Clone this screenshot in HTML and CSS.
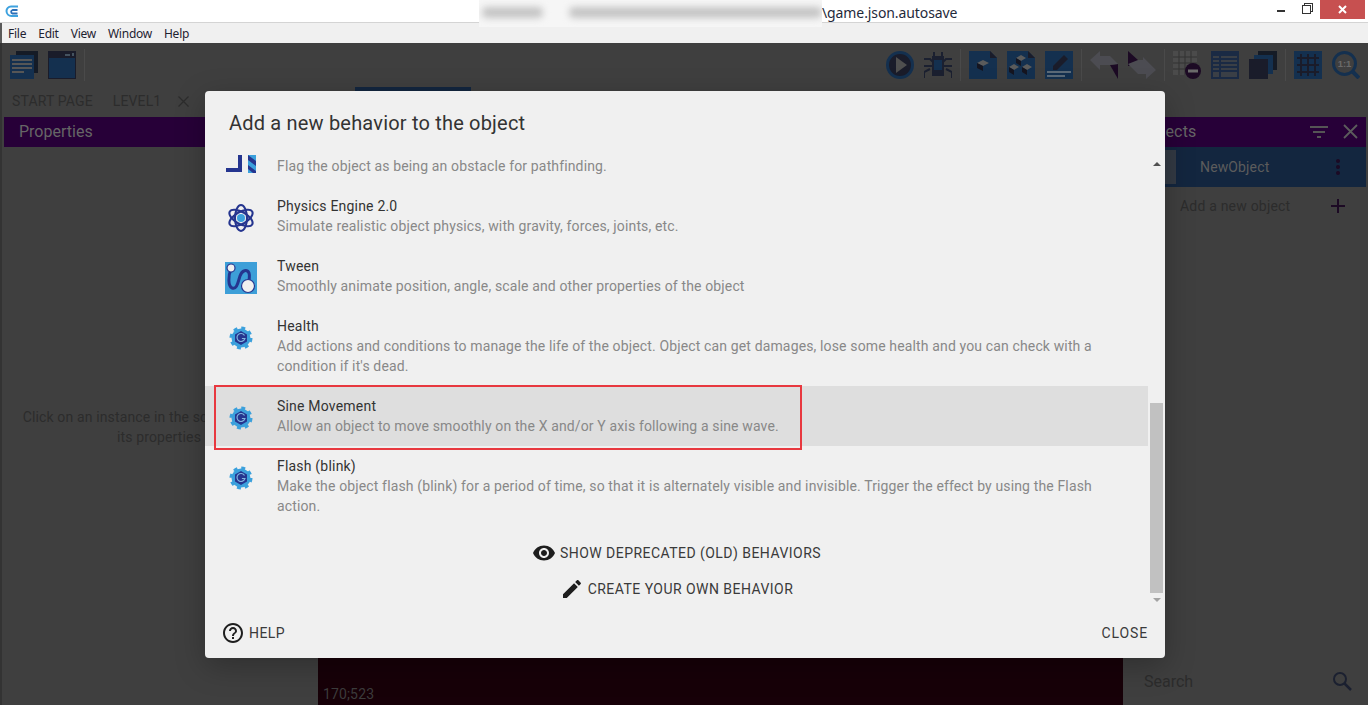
FILE: index.html
```html
<!DOCTYPE html>
<html lang="en">
<head>
    <meta charset="UTF-8">
    <meta name="viewport" content="width=device-width, initial-scale=1.0">
    <title>Add a new behavior</title>
    <link rel="stylesheet" href="styles.css">
</head>
<body>
    <!-- Shared icons -->
    <svg class="icon-defs" width="0" height="0">
        <symbol id="gear" viewBox="0 0 32 32">
            <circle cx="16" cy="16" r="9.5" fill="#3ba0dc"/>
            <circle cx="16" cy="16" r="10" fill="none" stroke="#3ba0dc" stroke-width="3" stroke-dasharray="3.9 3.95"/>
            <path d="M16 9l6 3.500v7L16 23l-6-3.500v-7z" fill="#25358f"/>
            <path d="M19.500 13.500a4 4 0 1 0 .4 3h-3" fill="none" stroke="#7fb4e0" stroke-width="1.200"/>
        </symbol>
    </svg>

    <!-- Window chrome -->
    <div class="titlebar">
        <svg class="app-logo" width="14" height="14" viewBox="0 0 14 14">
            <path d="M13 2.500H6a4.500 4.500 0 0 0-4.500 4.600A5 5 0 0 0 6.500 12H13" fill="none" stroke="#3ea2df" stroke-width="2"/>
            <path d="M12.500 6H7.500a1.800 1.800 0 0 0 0 3.500h5" fill="none" stroke="#2b6fb8" stroke-width="1.800"/>
        </svg>
        <div class="blurred-path">
            <span class="blob blob-short"></span>
            <span class="blob blob-long"></span>
        </div>
        <span class="title-text">\game.json.autosave</span>
        <div class="window-btns">
            <span class="win-min"></span>
            <span class="win-restore"></span>
            <span class="win-close">
                <svg width="11" height="11" viewBox="0 0 11 11"><path d="M2 2l7 7M9 2l-7 7" stroke="#fff" stroke-width="2"/></svg>
            </span>
        </div>
    </div>
    <div class="menubar">
        <span>File</span>
        <span>Edit</span>
        <span>View</span>
        <span>Window</span>
        <span>Help</span>
    </div>

    <!-- Editor, dimmed behind the dialog -->
    <div class="app">
        <div class="toolbar">
            <svg class="tool" viewBox="0 0 28 28"><path d="M6 0h22v22H6z" fill="#151b26"/><path d="M0 4h24v24H0z" fill="#14304f"/><path d="M2 8h20v2H2zM2 12h20v2H2zM2 16h20v2H2zM2 20h12v2H2z" fill="#565656"/></svg>
            <svg class="tool" viewBox="0 0 28 28"><path d="M0 0h28v28H0z" fill="#1a1c2a"/><path d="M1 7h26v20H1z" fill="#14304f"/><path d="M17 3h5v2h-5zM24 2h2v3h-2z" fill="#44525f"/></svg>
            <span class="tool-sep"></span>

            <span class="tool-spacer"></span>

            <svg class="tool" viewBox="0 0 28 28"><circle cx="14" cy="14" r="12.500" fill="#1a1c2a" stroke="#14304f" stroke-width="3"/><path d="M10 6l11 8-11 8z" fill="#4f4f4f"/></svg>
            <svg class="tool" viewBox="0 0 28 28"><path d="M0 8h6l3 3h10l3-3h6M0 15h28M0 27v-6l6-3M28 27v-6l-6-3M10 1v5M18 1v5" fill="none" stroke="#1b2030" stroke-width="2"/><path d="M8 5h12v20H8z" fill="#1b2030"/><path d="M10 9h8v10h-8z" fill="#14304f"/></svg>
            <span class="tool-sep"></span>
            <svg class="tool" viewBox="0 0 28 28"><path d="M0 0h21l7 7v21H0z" fill="#14304f"/><path d="M21 0l7 7h-7z" fill="#1a1c2a"/><path d="M14 9l6 3-6 3-6-3z" fill="#5b5b5b"/><path d="M8 12l6 3v5l-6-3z" fill="#151520"/></svg>
            <svg class="tool" viewBox="0 0 28 28"><path d="M0 0h21l7 7v21H0z" fill="#14304f"/><path d="M21 0l7 7h-7z" fill="#1a1c2a"/><path d="M14 4l5 3-5 3-5-3zM7 13l5 3-5 3-5-3zM20 13l5 3-5 3-5-3z" fill="#5b5b5b"/><path d="M9 7l5 3v5l-5-3zM2 16l5 3v5l-5-3zM15 16l5 3v5l-5-3z" fill="#151520"/></svg>
            <svg class="tool" viewBox="0 0 28 28"><path d="M0 0h28v28H0z" fill="#14304f"/><path d="M8 15L19 4l4 4-11 11H8z" fill="#1a1c2a"/><path d="M2 20h24v2H2zM2 24h18v2H2z" fill="#5b6a78"/></svg>
            <span class="tool-sep"></span>
            <svg class="tool" viewBox="0 0 28 28"><path d="M20 14l8-1v15z" fill="#1c0a24"/><path d="M0 9L10 0v5h10l8 8-8 1H10v5z" fill="#4c4c52"/></svg>
            <svg class="tool" viewBox="0 0 28 28"><path d="M0 0l10 9v5l-10 1z" fill="#1c0a24"/><path d="M0 13l10-4h5V6l13 13-10 9v-5h-8z" fill="#4c4c52"/></svg>
            <span class="tool-sep"></span>
            <svg class="tool" viewBox="0 0 28 28"><path d="M0 0h24v24H0z" fill="#4b4b4b"/><path d="M6 0v24M12 0v24M18 0v24M0 6h24M0 12h24M0 18h24" stroke="#333" stroke-width="1"/><circle cx="20" cy="20" r="8" fill="#1c0a24"/><path d="M15 18.500h10v3H15z" fill="#6a6a6a"/></svg>
            <svg class="tool" viewBox="0 0 28 28"><path d="M0 0h28v28H0z" fill="#1a2a44"/><path d="M2 5h24v21H2z" fill="#3a3f46"/><path d="M2 8h24M2 12h24M2 16h24M2 20h24M9 5v21" stroke="#1a2a44" stroke-width="2"/></svg>
            <svg class="tool" viewBox="0 0 28 28"><path d="M9 0h19v19H9z" fill="#151b26"/><path d="M5 4h19v19H5z" fill="#14304f"/><path d="M0 8h19v20H0z" fill="#1a1c2a"/></svg>
            <span class="tool-sep"></span>
            <svg class="tool" viewBox="0 0 28 28"><path d="M0 0h28v28H0z" fill="#14304f"/><path d="M7 3v22M14 3v22M21 3v22M3 7h22M3 14h22M3 21h22" stroke="#1a1c2a" stroke-width="2"/></svg>
            <svg class="tool" viewBox="0 0 28 28"><circle cx="12.500" cy="12.500" r="11" fill="none" stroke="#14304f" stroke-width="3"/><path d="M20 20l7 7" stroke="#14304f" stroke-width="4"/><text x="12.500" y="16" class="tool-text">1:1</text></svg>
        </div>

        <div class="tabs">
            <span class="tab">START PAGE</span>
            <span class="tab">LEVEL1</span>
            <svg class="tab-close" width="11" height="11" viewBox="0 0 11 11"><path d="M0.500 0.500l10 10M10.500 0.500l-10 10" stroke="#2c2c2c" stroke-width="1.200"/></svg>
            <span class="tab-active"></span>
        </div>

        <div class="panels">
            <div class="panel-left">
                <div class="panel-title">Properties</div>
                <div class="panel-hint">Click on an instance in the scene to display<br>its properties</div>
            </div>
            <div class="scene">
                <span class="coords">170;523</span>
            </div>
            <div class="panel-right">
                <div class="panel-title objects-title">
                    <span class="objects-name">Objects</span>
                    <svg width="20" height="14" viewBox="0 0 20 14"><path d="M1 2h18v2H1zM4 7h12v2H4zM8 12h4v2H8z" fill="#555"/></svg>
                    <svg class="objects-close" width="15" height="15" viewBox="0 0 15 15"><path d="M1 1l13 13M14 1L1 14" stroke="#5c5c5c" stroke-width="1.800"/></svg>
                </div>
                <div class="object-row">
                    <span class="object-thumb"></span>
                    <span class="object-name">NewObject</span>
                    <svg width="4" height="16" viewBox="0 0 4 16"><circle cx="2" cy="2" r="2" fill="#1c0a24"/><circle cx="2" cy="8" r="2" fill="#1c0a24"/><circle cx="2" cy="14" r="2" fill="#1c0a24"/></svg>
                </div>
                <div class="add-object">
                    <span>Add a new object</span>
                    <svg width="14" height="14" viewBox="0 0 14 14"><path d="M7 0v14M0 7h14" stroke="#1c0a24" stroke-width="2"/></svg>
                </div>
                <div class="object-search">
                    <span>Search</span>
                    <svg width="20" height="20" viewBox="0 0 20 20"><circle cx="8" cy="8" r="6" fill="none" stroke="#1b2030" stroke-width="2"/><path d="M12.500 12.500L19 19" stroke="#1b2030" stroke-width="2.500"/></svg>
                </div>
            </div>
        </div>
    </div>

    <!-- Add behavior dialog -->
    <div class="dialog">
        <h2>Add a new behavior to the object</h2>
        <div class="dialog-body">
            <div class="behavior-list">
                <div class="rows">
                    <div class="row row-clipped">
                        <svg class="row-icon" viewBox="0 0 32 32">
                            <path d="M1 26h12V13h4v17H1z" fill="#25358f"/>
                            <path d="M23 13h8v18h-8z" fill="#3ba0dc"/>
                            <path d="M23 13l8 6v5l-8-6zM23 23l8 6v2h-3l-5-4z" fill="#25358f"/>
                        </svg>
                        <div class="row-text">
                            <div class="row-name">&nbsp;</div>
                            <div class="row-desc">Flag the object as being an obstacle for pathfinding.</div>
                        </div>
                    </div>
                    <div class="row">
                        <svg class="row-icon" viewBox="0 0 32 32">
                            <g fill="none" stroke="#25358f" stroke-width="2">
                                <ellipse cx="16" cy="16" rx="13" ry="6" transform="rotate(30 16 16)"/>
                                <ellipse cx="16" cy="16" rx="13" ry="6" transform="rotate(90 16 16)"/>
                                <ellipse cx="16" cy="16" rx="13" ry="6" transform="rotate(150 16 16)"/>
                                <circle cx="16" cy="16" r="7" stroke-width="1"/>
                            </g>
                            <circle cx="16" cy="16" r="4" fill="#3ba0dc"/>
                        </svg>
                        <div class="row-text">
                            <div class="row-name">Physics Engine 2.0</div>
                            <div class="row-desc">Simulate realistic object physics, with gravity, forces, joints, etc.</div>
                        </div>
                    </div>
                    <div class="row">
                        <svg class="row-icon" viewBox="0 0 32 32">
                            <path d="M0 0h32v32H0z" fill="#3d9fd8"/>
                            <path d="M6 7C3 14 3 24 7 26c5 2 6-6 8-12 2-6 7-7 9-3 1 3 0 8-1 12" fill="none" stroke="#25358f" stroke-width="3"/>
                            <circle cx="6" cy="6" r="4" fill="#f0f0f0" stroke="#25358f" stroke-width="1.200"/>
                            <circle cx="23" cy="24" r="6.500" fill="#f0f0f0" stroke="#25358f" stroke-width="1.200"/>
                        </svg>
                        <div class="row-text">
                            <div class="row-name">Tween</div>
                            <div class="row-desc">Smoothly animate position, angle, scale and other properties of the object</div>
                        </div>
                    </div>
                    <div class="row">
                        <svg class="row-icon"><use href="#gear"/></svg>
                        <div class="row-text">
                            <div class="row-name">Health</div>
                            <div class="row-desc">Add actions and conditions to manage the life of the object. Object can get damages, lose some health and you can check with a condition if it's dead.</div>
                        </div>
                    </div>
                    <div class="row row-selected">
                        <svg class="row-icon"><use href="#gear"/></svg>
                        <div class="row-text">
                            <div class="row-name">Sine Movement</div>
                            <div class="row-desc">Allow an object to move smoothly on the X and/or Y axis following a sine wave.</div>
                        </div>
                        <span class="highlight-box"></span>
                    </div>
                    <div class="row">
                        <svg class="row-icon"><use href="#gear"/></svg>
                        <div class="row-text">
                            <div class="row-name">Flash (blink)</div>
                            <div class="row-desc">Make the object flash (blink) for a period of time, so that it is alternately visible and invisible. Trigger the effect by using the Flash action.</div>
                        </div>
                    </div>
                </div>
                <div class="list-actions">
                    <div class="text-btn">
                        <svg width="24" height="24" viewBox="0 0 24 24"><path d="M12 4.500C7 4.500 2.730 7.610 1 12c1.730 4.390 6 7.500 11 7.500s9.270-3.110 11-7.500c-1.730-4.390-6-7.500-11-7.500zM12 17c-2.760 0-5-2.240-5-5s2.240-5 5-5 5 2.240 5 5-2.240 5-5 5zm0-8c-1.660 0-3 1.340-3 3s1.340 3 3 3 3-1.340 3-3-1.340-3-3-3z"/></svg>
                        <span>Show deprecated (old) behaviors</span>
                    </div>
                    <div class="text-btn">
                        <svg width="24" height="24" viewBox="0 0 24 24"><path d="M3 17.250V21h3.750L17.810 9.940l-3.750-3.750L3 17.250zM20.710 7.040c.39-.39.39-1.020 0-1.410l-2.340-2.340c-.39-.39-1.020-.39-1.410 0l-1.830 1.830 3.750 3.750 1.830-1.830z"/></svg>
                        <span>Create your own behavior</span>
                    </div>
                </div>
            </div>
            <div class="scrollbar">
                <span class="arrow-up"></span>
                <span class="thumb"></span>
                <span class="arrow-down"></span>
            </div>
        </div>
        <div class="dialog-footer">
            <div class="text-btn">
                <svg width="24" height="24" viewBox="0 0 24 24"><path d="M11 18h2v-2h-2v2zm1-16C6.480 2 2 6.480 2 12s4.480 10 10 10 10-4.480 10-10S17.520 2 12 2zm0 18c-4.410 0-8-3.590-8-8s3.590-8 8-8 8 3.590 8 8-3.590 8-8 8zm0-14c-2.210 0-4 1.790-4 4h2c0-1.100.9-2 2-2s2 .9 2 2c0 2-3 1.750-3 5h2c0-2.250 3-2.500 3-5 0-2.210-1.790-4-4-4z"/></svg>
                <span>Help</span>
            </div>
            <div class="text-btn close-btn">
                <span>Close</span>
            </div>
        </div>
    </div>
</body>
</html>
```

FILE: styles.css
```css
/* Page */
html, body {
    margin: 0;
    padding: 0;
    height: 705px;
    overflow: hidden;
}

body {
    display: flex;
    flex-direction: column;
    font-family: 'Roboto', 'Liberation Sans', sans-serif;
    font-size: 14px;
    letter-spacing: 0.14px;
    background: #3f3f3f;
    position: relative;
}

.icon-defs {
    position: absolute;
}

/* Window chrome */
.titlebar {
    height: 22px;
    flex: none;
    display: flex;
    align-items: center;
    background: #fff;
    border-bottom: 1px solid #d4d4d4;
    font-family: 'Noto Sans', 'Open Sans', sans-serif;
    font-size: 14px;
    letter-spacing: -0.1px;
    color: #1f2a3a;
}

.app-logo {
    margin-left: 5px;
    flex: none;
}

.blurred-path {
    width: 343px;
    height: 27px;
    margin-left: 460px;
    align-self: flex-start;
    display: flex;
    align-items: center;
    gap: 26px;
    background: #f6f6f6;
    position: relative;
    z-index: 1;
    overflow: hidden;
}

.blob {
    height: 11px;
    margin-top: -3px;
    background: #c4c4c4;
    border-radius: 5px;
    filter: blur(3.5px);
}

.blob-short {
    width: 62px;
    margin-left: 3px;
}

.blob-long {
    width: 255px;
}

.title-text {
    margin-top: 2px;
}

.window-btns {
    margin-left: auto;
    align-self: flex-start;
    display: flex;
    align-items: center;
}

.win-min {
    width: 8px;
    height: 2px;
    margin-top: 3px;
    margin-right: 17px;
    background: #333;
}

.win-restore {
    width: 7px;
    height: 7px;
    margin-right: 9px;
    border: 1px solid #333;
    box-shadow: 2px -2px 0 -1px #fff, 2px -2px 0 0 #333;
}

.win-close {
    width: 45px;
    height: 19px;
    margin-right: 3px;
    display: flex;
    align-items: center;
    justify-content: center;
    background: #c75050;
}

.menubar {
    height: 20px;
    flex: none;
    display: flex;
    align-items: center;
    gap: 12px;
    padding-left: 6px;
    background: #f0f0f0;
    border-left: 2px solid #5a5a5a;
    font-family: 'Noto Sans', 'Open Sans', sans-serif;
    font-size: 12px;
    letter-spacing: -0.25px;
    color: #1f2230;
}

/* Dimmed editor */
.app {
    flex: 1;
    display: flex;
    flex-direction: column;
    min-height: 0;
    box-shadow: inset 2px 0 0 #333;
    color: #5c5c5c;
}

.toolbar {
    height: 44px;
    flex: none;
    display: flex;
    align-items: center;
    gap: 10px;
    padding: 0 8px 0 10px;
}

.tool {
    width: 28px;
    height: 28px;
    flex: none;
}

.tool-text {
    font-family: 'Liberation Sans', sans-serif;
    font-size: 9.5px;
    font-weight: 700;
    letter-spacing: 0;
    fill: #6a6a6a;
    text-anchor: middle;
}

.tool-sep {
    width: 1px;
    height: 32px;
    margin: 0 -2px;
    background: #4a4a4a;
}

.tool-spacer {
    flex: 1;
}

.tabs {
    height: 30px;
    flex: none;
    display: flex;
    align-items: center;
    color: #2c2c2c;
    position: relative;
}

.tab {
    margin: 0 8px 2px 12px;
}

.tab-close {
    margin: 0 0 2px 9px;
}

.tab-active {
    width: 116px;
    height: 4px;
    margin-left: 166px;
    align-self: flex-start;
    background: #13263f;
}

.panels {
    flex: 1;
    display: flex;
    min-height: 0;
}

.panel-left {
    width: 314px;
    margin-left: 4px;
    flex: none;
    display: flex;
    flex-direction: column;
}

.panel-title {
    height: 30px;
    flex: none;
    display: flex;
    align-items: center;
    padding: 0 0 2px 15px;
    box-sizing: border-box;
    background: #270038;
    font-size: 16px;
    letter-spacing: 0;
    color: #666;
}

.panel-hint {
    margin-top: 260px;
    padding: 0 4px 0 0;
    text-align: center;
    line-height: 20px;
    color: #2c2c2c;
}

.scene {
    flex: 1;
    display: flex;
    align-items: flex-end;
    background: #170008;
    padding: 0 0 3px 5px;
    color: #3c3c3c;
}

.panel-right {
    width: 243px;
    margin-right: 2px;
    flex: none;
    display: flex;
    flex-direction: column;
}

.objects-title {
    padding-left: 18px;
    padding-right: 8px;
    letter-spacing: 0.2px;
}

.objects-name {
    flex: 1;
}

.objects-close {
    margin-left: 14px;
}

.object-row {
    height: 40px;
    flex: none;
    display: flex;
    align-items: center;
    padding-right: 26px;
    background: #13263f;
    color: #5c5c5c;
}

.object-thumb {
    width: 32px;
    height: 34px;
    margin-left: 21px;
    background: #333a44;
}

.object-name {
    flex: 1;
    margin-left: 24px;
}

.add-object {
    height: 37px;
    flex: none;
    display: flex;
    align-items: center;
    justify-content: space-between;
    padding: 0 21px 0 57px;
    letter-spacing: 0.2px;
    color: #2c2c2c;
}

.object-search {
    margin-top: auto;
    height: 48px;
    flex: none;
    display: flex;
    align-items: center;
    justify-content: space-between;
    padding: 0 14px 0 21px;
    font-size: 16px;
    letter-spacing: 0;
    color: #2c2c2c;
}

/* Dialog */
.dialog {
    position: absolute;
    left: 205px;
    top: 91px;
    width: 960px;
    height: 567px;
    display: flex;
    flex-direction: column;
    background: #f0f0f0;
    border-radius: 4px;
    box-shadow: 0 8px 30px rgba(0, 0, 0, 0.25);
}

h2 {
    height: 64px;
    flex: none;
    margin: 0;
    padding: 20px 24px 0;
    box-sizing: border-box;
    font-size: 20px;
    font-weight: 400;
    line-height: 24px;
    letter-spacing: 0.19px;
    color: #333;
}

.dialog-body {
    height: 453px;
    flex: none;
    display: flex;
}

.behavior-list {
    flex: 1;
    overflow: hidden;
}

.rows {
    margin-top: -29px;
}

.row {
    display: flex;
    align-items: flex-start;
    gap: 20px;
    padding: 10px 40px 10px 20px;
    position: relative;
}

.row-selected {
    background: #dedede;
}

.row-icon {
    width: 32px;
    height: 32px;
    margin-top: 6px;
    flex: none;
}

.row-text {
    flex: 1;
    line-height: 20px;
}

.row-name {
    letter-spacing: 0.2px;
    color: #333;
}

.row-desc {
    color: #888;
}

.highlight-box {
    position: absolute;
    left: 9px;
    top: -1px;
    width: 584px;
    height: 61px;
    border: 2px solid #e8383f;
}

.list-actions {
    margin-top: 9px;
}

.text-btn {
    height: 36px;
    display: flex;
    align-items: center;
    justify-content: center;
    gap: 4px;
    text-transform: uppercase;
    letter-spacing: 0.46px;
    color: #3a3a3a;
}

.text-btn svg {
    fill: #1e1e1e;
}

.close-btn {
    letter-spacing: 0.9px;
}

.scrollbar {
    width: 17px;
    flex: none;
    display: flex;
    flex-direction: column;
    align-items: center;
}

.arrow-up, .arrow-down {
    width: 0;
    height: 0;
    flex: none;
    border-left: 4px solid transparent;
    border-right: 4px solid transparent;
}

.arrow-up {
    margin-top: 7px;
    border-bottom: 4px solid #505050;
}

.arrow-down {
    margin-top: 5px;
    border-top: 4px solid #a3a3a3;
}

.thumb {
    width: 13px;
    height: 190px;
    margin-top: 237px;
    margin-right: 1px;
    background: #c1c1c1;
}

.dialog-footer {
    flex: 1;
    display: flex;
    align-items: center;
    justify-content: space-between;
    padding: 0 17px 0 16px;
}
```
